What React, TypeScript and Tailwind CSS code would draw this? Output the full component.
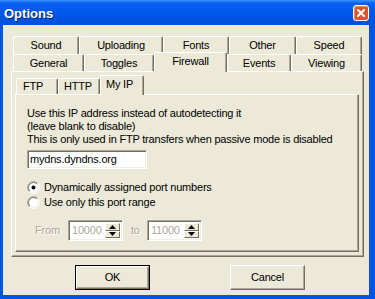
import React from "react";

function Radio({ checked }: { checked?: boolean }) {
  return (
    <svg width="13" height="13" viewBox="0 0 13 13" className="shrink-0">
      <circle cx="6.5" cy="6.5" r="5.5" fill="#ffffff" />
      <path d="M2.257 10.743 A6 6 0 0 1 10.743 2.257" fill="none" stroke="#ACA899" strokeWidth="1" />
      <path d="M10.743 2.257 A6 6 0 0 1 2.257 10.743" fill="none" stroke="#ffffff" strokeWidth="1" />
      <path d="M2.964 10.036 A5 5 0 0 1 10.036 2.964" fill="none" stroke="#716F64" strokeWidth="1" />
      <path d="M10.036 2.964 A5 5 0 0 1 2.964 10.036" fill="none" stroke="#F1EFE2" strokeWidth="1" />
      {checked ? <circle cx="6.5" cy="6.5" r="2" fill="#000000" /> : null}
    </svg>
  );
}

function Spin({ value }: { value: string }) {
  return (
    <div className="w-[55px] h-[21px] flex bg-white border border-t-[#ACA899] border-l-[#ACA899] border-b-white border-r-white shadow-[inset_1px_1px_0_#716F64,inset_-1px_-1px_0_#F1EFE2] p-[2px]">
      <div className="flex-1 text-[#ACA899] leading-[15px] pl-[1px]">{value}</div>
      <div className="w-[15px] flex flex-col">
        <div className="flex-1 bg-[#ECE9D8] border border-t-white border-l-white border-b-[#716F64] border-r-[#716F64] flex items-center justify-center">
          <svg width="7" height="4" viewBox="0 0 7 4"><path d="M3.5 0 L7 4 L0 4 Z" fill="#000" /></svg>
        </div>
        <div className="flex-1 bg-[#ECE9D8] border border-t-white border-l-white border-b-[#716F64] border-r-[#716F64] flex items-center justify-center">
          <svg width="7" height="4" viewBox="0 0 7 4"><path d="M0 0 L7 0 L3.5 4 Z" fill="#000" /></svg>
        </div>
      </div>
    </div>
  );
}

export default function App() {
  return (
    <div className="w-[375px] h-[299px] flex flex-col bg-[#0054E3] font-['Liberation_Sans',Arial,sans-serif] text-[11px] text-black overflow-hidden select-none">
      <div className="h-[25px] shrink-0 flex items-center justify-between bg-[linear-gradient(to_bottom,#3D95FF_0%,#0A62F2_12%,#0058EE_40%,#0054E3_75%,#0050D8_100%)]">
        <span className="pl-[4px] pt-[1px] text-white font-bold text-[13px] leading-none [text-shadow:1px_1px_0_#0A246A]">Options</span>
        <div className="mr-[6px] w-[16px] h-[16px] rounded-[3px] border border-white bg-[#E0542A] shadow-[inset_1px_1px_0_#F08A60] flex items-center justify-center">
          <svg width="8" height="8" viewBox="0 0 8 8">
            <path d="M1 1 L7 7 M7 1 L1 7" stroke="#ffffff" strokeWidth="2" strokeLinecap="square" />
          </svg>
        </div>
      </div>
      <div className="flex-1 ml-[3px] mr-[6px] mb-[4px] bg-[#ECE9D8] flex flex-col pt-[11px] pl-[8px] pr-[5px] tracking-[-0.2px]">
        <div className="flex pl-[2px] h-[18px]">
          <div className="w-[66px] h-[18px] flex items-center justify-center rounded-t-[2px] border-t border-l border-white border-r border-r-[#716F64] shadow-[inset_-1px_0_0_#ACA899]">Sound</div>
          <div className="w-[84px] h-[18px] flex items-center justify-center rounded-t-[2px] border-t border-l border-white border-r border-r-[#716F64] shadow-[inset_-1px_0_0_#ACA899]">Uploading</div>
          <div className="w-[66px] h-[18px] flex items-center justify-center rounded-t-[2px] border-t border-l border-white border-r border-r-[#716F64] shadow-[inset_-1px_0_0_#ACA899]">Fonts</div>
          <div className="w-[67px] h-[18px] flex items-center justify-center rounded-t-[2px] border-t border-l border-white border-r border-r-[#716F64] shadow-[inset_-1px_0_0_#ACA899]">Other</div>
          <div className="w-[66px] h-[18px] flex items-center justify-center rounded-t-[2px] border-t border-l border-white border-r border-r-[#716F64] shadow-[inset_-1px_0_0_#ACA899]">Speed</div>
        </div>
        <div className="flex pl-[2px] h-[17px] items-end">
          <div className="w-[71px] h-[17px] bg-[#ECE9D8] flex items-center justify-center rounded-t-[2px] border-t border-l border-white border-r border-r-[#716F64] shadow-[inset_-1px_0_0_#ACA899]">General</div>
          <div className="w-[70px] h-[17px] bg-[#ECE9D8] flex items-center justify-center rounded-t-[2px] border-t border-l border-white border-r border-r-[#716F64] shadow-[inset_-1px_0_0_#ACA899]">Toggles</div>
          <div className="relative z-10 w-[73px] h-[20px] mb-[-1px] pb-[2px] bg-[#ECE9D8] flex items-center justify-center rounded-t-[2px] border-t border-l border-white border-r border-r-[#716F64] shadow-[inset_-1px_0_0_#ACA899]">Firewall</div>
          <div className="w-[64px] h-[17px] bg-[#ECE9D8] flex items-center justify-center rounded-t-[2px] border-t border-l border-white border-r border-r-[#716F64] shadow-[inset_-1px_0_0_#ACA899]">Events</div>
          <div className="w-[71px] h-[17px] bg-[#ECE9D8] flex items-center justify-center rounded-t-[2px] border-t border-l border-white border-r border-r-[#716F64] shadow-[inset_-1px_0_0_#ACA899]">Viewing</div>
        </div>
        <div className="w-[353px] h-[186px] shrink-0 flex flex-col border border-t-white border-l-white border-r-[#716F64] border-b-[#716F64] shadow-[inset_-1px_-1px_0_#ACA899] pt-[6px] pl-[3px] pr-[4px] pb-[4px]">
          <div className="flex pl-[1px] h-[16px] items-end shrink-0">
            <div className="w-[42px] h-[16px] bg-[#ECE9D8] flex items-center pl-[6px] rounded-t-[2px] border-t border-l border-white border-r border-r-[#716F64] shadow-[inset_-1px_0_0_#ACA899]">FTP</div>
            <div className="w-[42px] h-[16px] bg-[#ECE9D8] flex items-center pl-[5px] rounded-t-[2px] border-t border-l border-white border-r border-r-[#716F64] shadow-[inset_-1px_0_0_#ACA899]">HTTP</div>
            <div className="relative z-10 w-[44px] h-[20px] mb-[-1px] pb-[3px] bg-[#ECE9D8] flex items-center pl-[5px] rounded-t-[2px] border-t border-l border-white border-r border-r-[#716F64] shadow-[inset_-1px_0_0_#ACA899]">My IP</div>
          </div>
          <div className="flex-1 flex flex-col border border-t-white border-l-white border-r-[#716F64] border-b-[#716F64] shadow-[inset_-1px_-1px_0_#ACA899] pl-[11px] pt-[12px]">
            <div className="leading-[13px]">Use this IP address instead of autodetecting it</div>
            <div className="leading-[13px]">(leave blank to disable)</div>
            <div className="leading-[13px]">This is only used in FTP transfers when passive mode is disabled</div>
            <div className="mt-[4px] w-[120px] h-[19px] bg-white border border-t-[#ACA899] border-l-[#ACA899] border-b-white border-r-white shadow-[inset_1px_1px_0_#716F64,inset_-1px_-1px_0_#F1EFE2] pl-[2px] leading-[17px]">mydns.dyndns.org</div>
            <div className="mt-[11px] h-[15px] flex items-center gap-[4px]">
              <Radio checked />
              <span>Dynamically assigned port numbers</span>
            </div>
            <div className="h-[15px] flex items-center gap-[4px]">
              <Radio />
              <span>Use only this port range</span>
            </div>
            <div className="mt-[10px] flex items-center">
              <span className="ml-[8px] w-[33px] text-[#ACA899] [text-shadow:1px_1px_0_#ffffff]">From</span>
              <Spin value="10000" />
              <span className="ml-[8px] w-[16px] text-[#ACA899] [text-shadow:1px_1px_0_#ffffff]">to</span>
              <Spin value="11000" />
            </div>
          </div>
        </div>
        <div className="mt-[8px] flex pl-[64px] gap-[80px]">
          <div className="w-[75px] h-[25px] border border-black">
            <div className="w-full h-full flex items-center justify-center border border-t-white border-l-white border-r-[#716F64] border-b-[#716F64] shadow-[inset_-1px_-1px_0_#ACA899]">OK</div>
          </div>
          <div className="w-[75px] h-[25px] flex items-center justify-center border border-t-white border-l-white border-r-[#716F64] border-b-[#716F64] shadow-[inset_-1px_-1px_0_#ACA899]">Cancel</div>
        </div>
      </div>
    </div>
  );
}
